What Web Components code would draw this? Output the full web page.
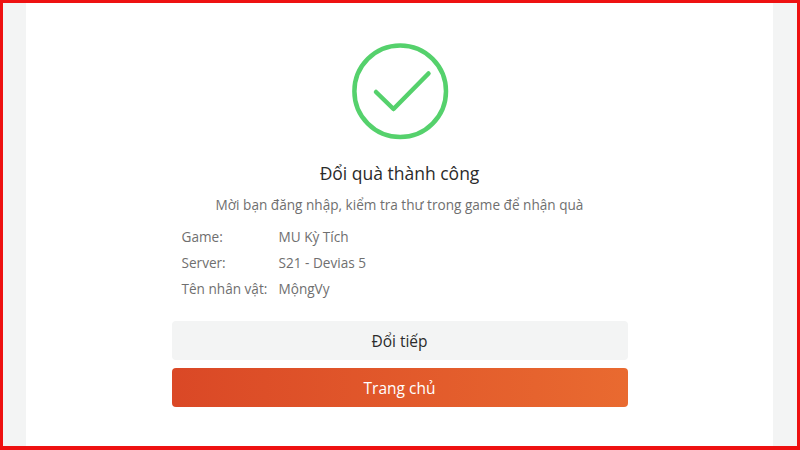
<!DOCTYPE html>
<html lang="vi">
<head>
<meta charset="utf-8">
<title>Đổi quà thành công</title>
<style>
  html, body { margin: 0; height: 100%; }
  body { font-family: "Open Sans", "Noto Sans", sans-serif; }
</style>
</head>
<body>
<redeem-page>
  <redeem-result heading="Đổi quà thành công" message="Mời bạn đăng nhập, kiểm tra thư trong game để nhận quà">
    <info-row label="Game:">MU Kỳ Tích</info-row>
    <info-row label="Server:">S21 - Devias 5</info-row>
    <info-row label="Tên nhân vật:">MộngVy</info-row>
    <action-button slot="actions">Đổi tiếp</action-button>
    <action-button slot="actions" primary>Trang chủ</action-button>
  </redeem-result>
</redeem-page>

<script>
class RedeemPage extends HTMLElement {
  constructor() {
    super();
    this.attachShadow({ mode: 'open' });
    this.shadowRoot.innerHTML = `
      <style>
        :host {
          display: block;
          box-sizing: border-box;
          width: 800px;
          height: 450px;
          overflow: hidden;
          border: 3px solid #ee1111;
          border-bottom-width: 4px;
          background: #f3f4f4;
        }
        .card {
          box-sizing: border-box;
          height: 100%;
          margin: 0 24px 0 23px;
          background: #fff;
        }
      </style>
      <div class="card"><slot></slot></div>
    `;
  }
}

class RedeemResult extends HTMLElement {
  constructor() {
    super();
    this.attachShadow({ mode: 'open' });
  }

  connectedCallback() {
    const heading = this.getAttribute('heading');
    const message = this.getAttribute('message');
    this.shadowRoot.innerHTML = `
      <style>
        :host {
          display: flex;
          flex-direction: column;
          align-items: center;
          padding-top: 40px;
        }
        svg { display: block; width: 98px; height: 98px; }
        h2 {
          margin: 19px 0 0;
          font-size: 17.5px;
          line-height: 26px;
          font-weight: 400;
          color: #2b2b2b;
        }
        p {
          margin: 9px 0 0;
          font-size: 13.6px;
          line-height: 20px;
          color: #6f6f6f;
        }
        .info {
          display: grid;
          width: 456px;
          box-sizing: border-box;
          margin-top: 9px;
          padding-left: 10px;
        }
        .actions {
          display: flex;
          flex-direction: column;
          gap: 8px;
          width: 456px;
          margin-top: 19px;
        }
      </style>
      <svg viewBox="0 0 98 98" fill="none" stroke="#55d16c" stroke-linecap="round" stroke-linejoin="round">
        <circle cx="49.200" cy="48.300" r="45.800" stroke-width="4.500"/>
        <path d="M25 49 L42.500 66 L77.500 30.500" stroke-width="4.500"/>
      </svg>
      <h2>${heading}</h2>
      <p>${message}</p>
      <div class="info"><slot></slot></div>
      <div class="actions"><slot name="actions"></slot></div>
    `;
  }
}

class InfoRow extends HTMLElement {
  constructor() {
    super();
    this.attachShadow({ mode: 'open' });
  }

  connectedCallback() {
    this.shadowRoot.innerHTML = `
      <style>
        :host {
          display: grid;
          grid-template-columns: 97px 1fr;
          font-size: 13.6px;
          line-height: 26px;
          color: #6f6f6f;
          white-space: nowrap;
        }
      </style>
      <span>${this.getAttribute('label')}</span>
      <span><slot></slot></span>
    `;
  }
}

class ActionButton extends HTMLElement {
  constructor() {
    super();
    this.attachShadow({ mode: 'open' });
    this.shadowRoot.innerHTML = `
      <style>
        :host {
          display: flex;
          align-items: center;
          justify-content: center;
          height: 39px;
          border-radius: 4px;
          background: #f3f4f4;
          color: #2b2b2b;
          font-size: 15.5px;
          cursor: pointer;
        }
        :host([primary]) {
          background: linear-gradient(90deg, #da4826, #e96a30);
          color: #fff;
          font-weight: 500;
        }
      </style>
      <slot></slot>
    `;
  }
}

customElements.define('redeem-page', RedeemPage);
customElements.define('redeem-result', RedeemResult);
customElements.define('info-row', InfoRow);
customElements.define('action-button', ActionButton);
</script>
</body>
</html>
